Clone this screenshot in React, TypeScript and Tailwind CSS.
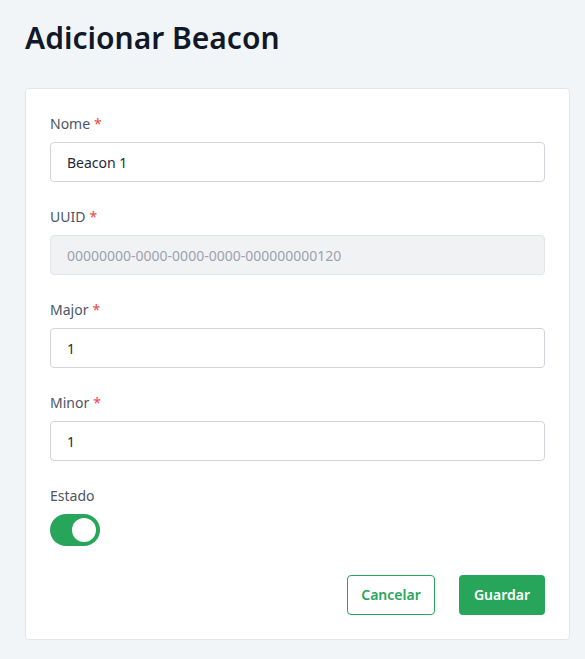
import { useState } from 'react';

function Field({ label, required, children }: { label: string; required?: boolean; children: React.ReactNode }) {
  return (
    <div className="mb-[25px]">
      <label className="mb-2 block h-5 text-sm leading-5 text-[#4b5563]">
        {label}
        {required && <span className="ml-1 text-[#ef4444]">*</span>}
      </label>
      {children}
    </div>
  );
}

export default function App() {
  const [name, setName] = useState('Beacon 1');
  const [major, setMajor] = useState('1');
  const [minor, setMinor] = useState('1');
  const [active, setActive] = useState(true);

  const inputClass =
    'block h-10 w-full rounded-[4px] border border-[#d1d5db] bg-white px-4 text-sm text-[#1f2937] outline-none';

  return (
    <div
      className="min-h-screen bg-[#f2f5f8] pl-[25px] pr-[15px] pt-5"
      style={{ fontFamily: '"Noto Sans", "Open Sans", sans-serif' }}
    >
      <h1 className="mb-8 text-[30px] font-semibold leading-9 text-[#111827]">Adicionar Beacon</h1>

      <div className="rounded-[4px] border border-[#e2e5e9] bg-white px-6 pb-6 pt-[25px]">
        <Field label="Nome" required>
          <input className={inputClass} value={name} onChange={(e) => setName(e.target.value)} />
        </Field>

        <Field label="UUID" required>
          <input
            className="block h-10 w-full rounded-[4px] border border-[#e2e5e9] bg-[#f1f2f4] px-4 text-sm text-[#9ca3af] outline-none"
            value="00000000-0000-0000-0000-000000000120"
            disabled
            readOnly
          />
        </Field>

        <Field label="Major" required>
          <input className={inputClass} value={major} onChange={(e) => setMajor(e.target.value)} />
        </Field>

        <Field label="Minor" required>
          <input className={inputClass} value={minor} onChange={(e) => setMinor(e.target.value)} />
        </Field>

        <div>
          <label className="mb-2 block h-5 text-sm leading-5 text-[#4b5563]">Estado</label>
          <button
            type="button"
            onClick={() => setActive(!active)}
            className={`flex h-8 w-[50px] items-center rounded-full px-1 ${
              active ? 'justify-end bg-[#27a65b]' : 'justify-start bg-[#d1d5db]'
            }`}
          >
            <span className="h-6 w-6 rounded-full bg-white" />
          </button>
        </div>

        <div className="mt-[29px] flex justify-end gap-6">
          <button
            type="button"
            className="h-10 w-[88px] rounded-[4px] border border-[#27a65b] bg-white text-sm font-semibold text-[#27a65b]"
          >
            Cancelar
          </button>
          <button
            type="button"
            className="h-10 w-[86px] rounded-[4px] bg-[#27a65b] text-sm font-semibold text-white"
          >
            Guardar
          </button>
        </div>
      </div>
    </div>
  );
}
